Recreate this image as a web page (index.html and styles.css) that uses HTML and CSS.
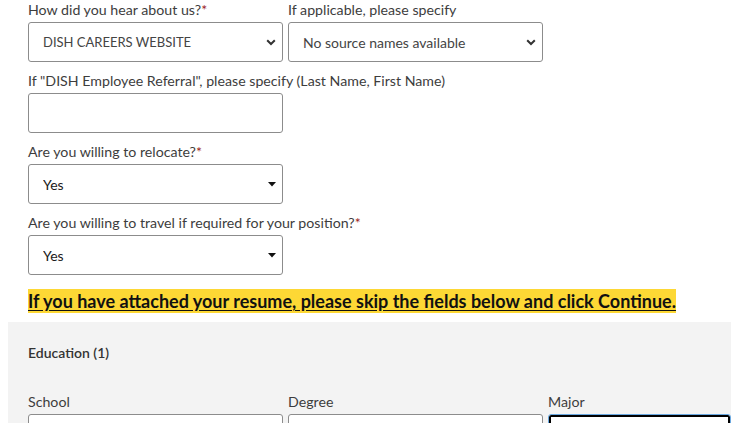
FILE: index.html
```html
<!DOCTYPE html>
<html lang="en">
<head>
<meta charset="utf-8">
<title>Application</title>
<link rel="stylesheet" href="styles.css">
</head>
<body>
<div class="page">
  <div class="form">
    <div class="row">
      <div class="field">
        <label class="label">How did you hear about us?<span class="req">*</span></label>
        <div class="control native">
          <select class="select upper"><option>DISH CAREERS WEBSITE</option></select>
          <svg class="chev" width="10" height="7" viewBox="0 0 10 7"><path d="M1.2 1.2 L5 5 L8.8 1.2" fill="none" stroke="#333" stroke-width="2"/></svg>
        </div>
      </div>
      <div class="field">
        <label class="label">If applicable, please specify</label>
        <div class="control native">
          <select class="select"><option>No source names available</option></select>
          <svg class="chev" width="10" height="7" viewBox="0 0 10 7"><path d="M1.2 1.2 L5 5 L8.8 1.2" fill="none" stroke="#333" stroke-width="2"/></svg>
        </div>
      </div>
    </div>

    <div class="field">
      <label class="label">If "DISH Employee Referral", please specify (Last Name, First Name)</label>
      <input class="input" type="text">
    </div>

    <div class="field">
      <label class="label">Are you willing to relocate?<span class="req">*</span></label>
      <div class="control">
        <select class="select dark"><option>Yes</option></select>
        <svg class="caret" width="8" height="5" viewBox="0 0 8 5"><path d="M0 0 H8 L4 4.5 Z" fill="#111"/></svg>
      </div>
    </div>

    <div class="field">
      <label class="label">Are you willing to travel if required for your position?<span class="req">*</span></label>
      <div class="control">
        <select class="select dark"><option>Yes</option></select>
        <svg class="caret" width="8" height="5" viewBox="0 0 8 5"><path d="M0 0 H8 L4 4.5 Z" fill="#111"/></svg>
      </div>
    </div>

    <p class="notice"><span class="hl">If you have attached your resume, please skip the fields below and click Continue.</span></p>
  </div>

  <section class="edu">
    <h3 class="edu-title">Education (1)</h3>
    <div class="row three">
      <div class="field">
        <label class="label">School</label>
        <input class="input" type="text">
      </div>
      <div class="field">
        <label class="label">Degree</label>
        <input class="input" type="text">
      </div>
      <div class="field">
        <label class="label">Major</label>
        <input class="input focus" type="text">
      </div>
    </div>
  </section>
</div>
</body>
</html>
```

FILE: styles.css
```css
html, body {
  margin: 0;
  padding: 0;
  background: #fff;
  overflow: hidden;
}

body {
  font-family: Lato, "Open Sans", "Liberation Sans", sans-serif;
  font-size: 14px;
  color: #333;
}

.page {
  padding-left: 8px;
}

.form {
  padding: 0 20px;
}

.row {
  display: flex;
  gap: 5px;
}

.field {
  display: flex;
  flex-direction: column;
  margin-bottom: 9px;
}

.label {
  display: block;
  font-size: 14.2px;
  line-height: 20px;
  height: 20px;
  color: #3d3d3d;
  margin-bottom: 2px;
  white-space: nowrap;
}

.req {
  color: #9b1c1c;
}

.control {
  position: relative;
  width: 255px;
  height: 40px;
}

.select {
  -webkit-appearance: none;
  appearance: none;
  box-sizing: border-box;
  width: 255px;
  height: 40px;
  margin: 0;
  padding: 0 28px 0 14px;
  border: 1px solid #8c8c8c;
  border-radius: 3px;
  background: #fff;
  font-family: inherit;
  font-size: 14px;
  color: #444;
}

.select.upper {
  font-size: 13px;
}

.select.dark {
  color: #1a1a1a;
}

.chev {
  position: absolute;
  right: 7px;
  top: 17px;
  pointer-events: none;
}

.caret {
  position: absolute;
  right: 7px;
  top: 18px;
  pointer-events: none;
}

.input {
  box-sizing: border-box;
  width: 255px;
  height: 40px;
  margin: 0;
  padding: 0 12px;
  border: 1px solid #8c8c8c;
  border-radius: 3px;
  background: #fff;
  font-family: inherit;
  font-size: 14px;
}

.input.focus {
  border: 1px solid #6aa8e0;
  box-shadow: inset 0 0 0 2px #000;
}

.notice {
  margin: 15px 0 8px;
  line-height: 22px;
}

.hl {
  background: #fdd835;
  color: #111;
  font-weight: 700;
  font-size: 18px;
  text-decoration: underline;
  text-underline-offset: 2px;
  padding: 1px 0;
}

.edu {
  background: #f3f3f3;
  padding: 21px 0 0 20px;
  height: 120px;
}

.edu-title {
  margin: 0 0 29px;
  font-size: 14px;
  line-height: 20px;
  font-weight: 600;
  color: #333;
}

.three .field:last-child {
  flex: 1;
}

.three .field:last-child .input {
  width: 100%;
}
```
